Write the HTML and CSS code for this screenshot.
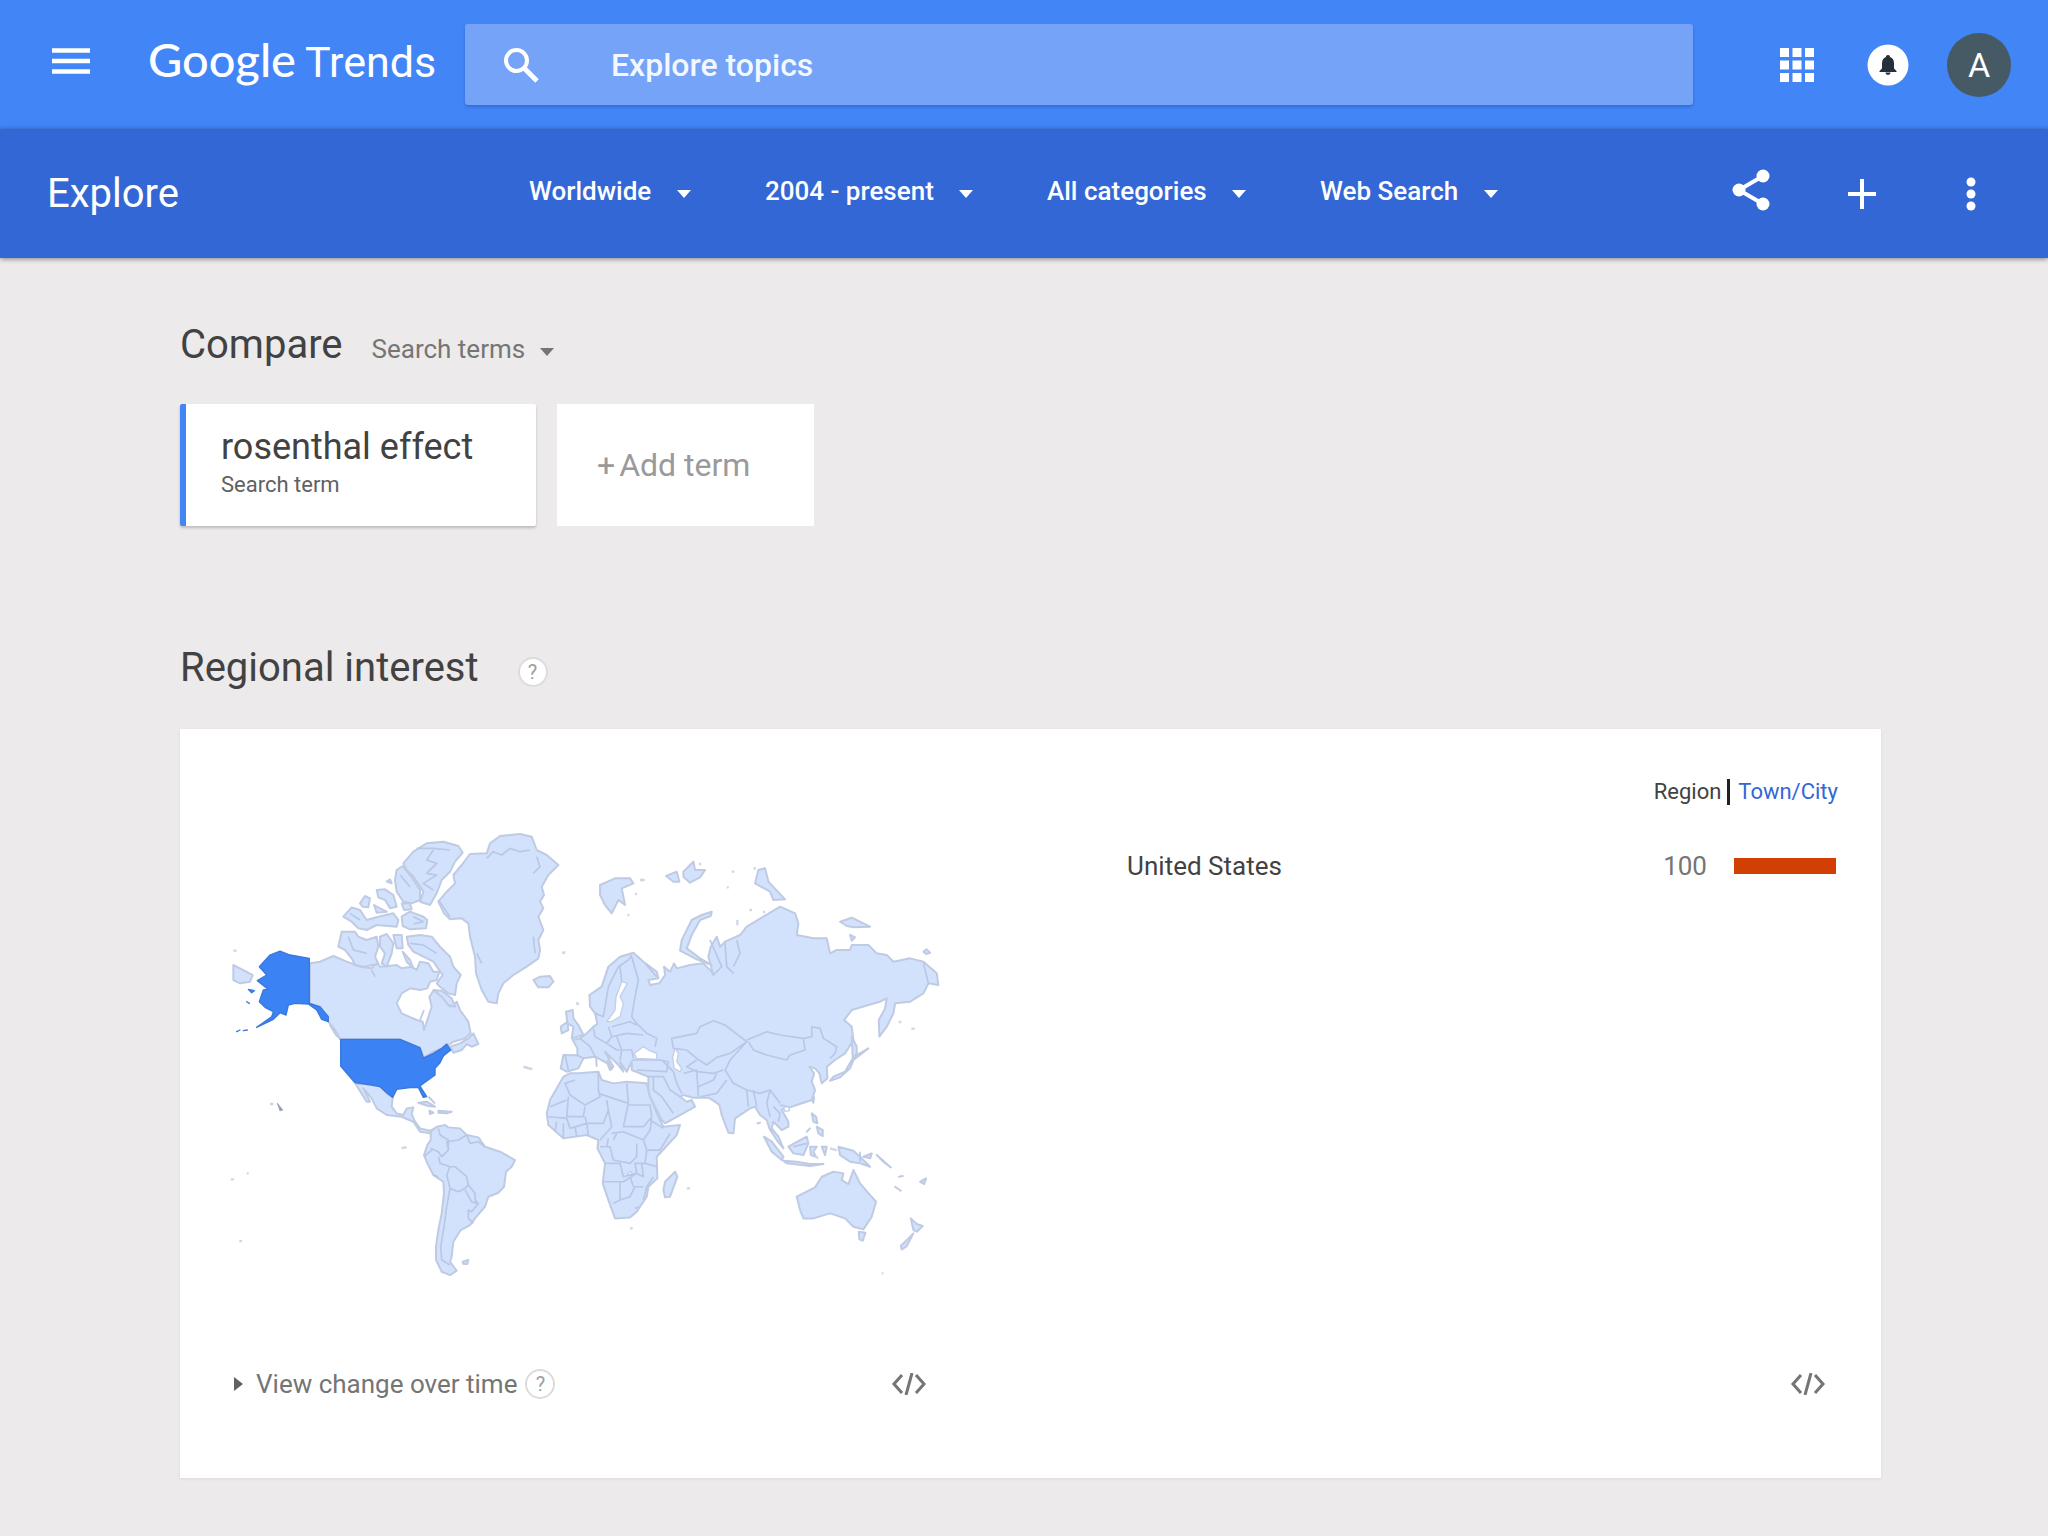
FILE: index.html
```html
<!DOCTYPE html>
<html lang="en">
<head>
<meta charset="utf-8">
<title>Google Trends - Explore</title>
<link rel="stylesheet" href="styles.css">
</head>
<body>
<header class="topbar">
  <button class="icon-btn menu" aria-label="Main menu">
    <svg width="38" height="26" viewBox="0 0 38 26"><path d="M0 2.5h38M0 13h38M0 23.5h38" stroke="#fff" stroke-width="4.5"/></svg>
  </button>
  <a class="logo" href="#"><span class="logo-google">Google</span><span class="logo-trends">Trends</span></a>
  <form class="search">
    <svg width="36" height="36" viewBox="0 0 36 36" fill="none" stroke="#fff" stroke-width="4"><circle cx="13.5" cy="13.5" r="10.5"/><path d="M21 21l13 13" stroke-width="5"/></svg>
    <input class="search-input" type="text" placeholder="Explore topics" aria-label="Explore topics">
  </form>
  <div class="account">
    <button class="icon-btn" aria-label="Apps">
      <svg width="34" height="34" viewBox="0 0 34 34" fill="#fff"><path d="M0 0h9v9H0zM12.500 0h9v9h-9zM25 0h9v9h-9zM0 12.500h9v9H0zM12.500 12.500h9v9h-9zM25 12.500h9v9h-9zM0 25h9v9H0zM12.500 25h9v9h-9zM25 25h9v9h-9z"/></svg>
    </button>
    <button class="icon-btn" aria-label="Notifications">
      <svg width="42" height="42" viewBox="0 0 42 42"><circle cx="21" cy="21" r="20.500" fill="#fff"/><path d="M21 11c1.500 0 2 .8 2 2 3 1 4 3.500 4 6.500v5l2.500 2.500v1H12.500v-1l2.500-2.500v-5c0-3 1-5.500 4-6.500 0-1.200.5-2 2-2zM18.500 28.500h5c0 1.500-1 2.300-2.500 2.300s-2.500-.8-2.500-2.300z" fill="#26303c"/></svg>
    </button>
    <button class="avatar" aria-label="Account">A</button>
  </div>
</header>

<div class="subbar">
  <h1 class="page-title">Explore</h1>
  <nav class="filters">
    <label class="filter"><select aria-label="Location"><option>Worldwide</option></select><svg class="caret" viewBox="0 0 14 8"><path d="M0 0h14L7 8z"/></svg></label>
    <label class="filter"><select aria-label="Time range"><option>2004 - present</option></select><svg class="caret" viewBox="0 0 14 8"><path d="M0 0h14L7 8z"/></svg></label>
    <label class="filter"><select aria-label="Category"><option>All categories</option></select><svg class="caret" viewBox="0 0 14 8"><path d="M0 0h14L7 8z"/></svg></label>
    <label class="filter"><select aria-label="Search type"><option>Web Search</option></select><svg class="caret" viewBox="0 0 14 8"><path d="M0 0h14L7 8z"/></svg></label>
  </nav>
  <div class="actions">
    <button class="icon-btn share" aria-label="Share">
      <svg width="38" height="42" viewBox="0 0 38 42"><path d="M31 7L7 21l24 14" fill="none" stroke="#fff" stroke-width="4"/><g fill="#fff"><circle cx="31" cy="7" r="6.500"/><circle cx="7" cy="21" r="6.500"/><circle cx="31" cy="35" r="6.500"/></g></svg>
    </button>
    <button class="icon-btn" aria-label="Add">
      <svg width="28" height="30" viewBox="0 0 28 30"><path d="M0 15h28M14 0v30" stroke="#fff" stroke-width="4"/></svg>
    </button>
    <button class="icon-btn" aria-label="More">
      <svg width="10" height="34" viewBox="0 0 10 34" fill="#fff"><circle cx="5" cy="5" r="4.500"/><circle cx="5" cy="17" r="4.500"/><circle cx="5" cy="29" r="4.500"/></svg>
    </button>
  </div>
</div>

<main class="content">
  <div class="compare">
    <h2 class="heading">Compare</h2>
    <label class="filter term-type"><select aria-label="Compare by"><option>Search terms</option></select><svg class="caret" viewBox="0 0 14 8"><path d="M0 0h14L7 8z"/></svg></label>
  </div>
  <div class="terms">
    <div class="term">
      <span class="term-name">rosenthal effect</span>
      <span class="term-kind">Search term</span>
    </div>
    <button class="add-term"><span>+</span><span>Add term</span></button>
  </div>

  <div class="regional">
    <h2 class="heading">Regional interest</h2>
    <button class="help" aria-label="Help">?</button>
  </div>
  <section class="panel">
    <div class="map-col">
      <svg class="map" viewBox="36 0 2085 1410" role="img" aria-label="World map, United States highlighted">
        <!-- Arctic Canada, Greenland, Canada -->
        <g class="land">
          <path d="M270 430L300 425 340 408 380 425 420 440 455 445 470 425 480 440 530 435 545 445 575 440 590 450 600 425 625 430 640 455 658 455 650 480 630 485 622 505 600 510 570 505 545 520 530 550 545 580 590 600 608 605 612 630 622 600 635 560 628 530 640 512 665 525 690 560 710 545 720 570 745 605 752 640 735 655 700 665 690 672 665 685 640 695 612 712 600 685 570 672 540 658 360 658 345 630 325 605 300 570 270 548Z"/>
          <path d="M690 680L720 670 745 655 760 640 775 672 755 680 740 672 725 690 700 698Z"/>
          <path d="M355 380L365 335 405 335 415 350 440 360 470 350 475 380 465 410 475 432 430 440 405 435 395 415 375 390Z"/>
          <path d="M370 290L395 262 420 270 440 300 475 290 520 280 535 300 530 320 470 315 440 330 415 325 395 305Z"/>
          <path d="M420 250L435 228 450 235 445 262 428 260ZM470 210L495 208 520 225 530 260 510 265 495 240 475 232ZM462 255L480 265 500 275 470 278ZM500 185L510 178 515 190Z"/>
          <path d="M525 180L530 150 548 138 570 165 600 210 600 240 575 250 550 245 530 215Z"/>
          <path d="M550 130L580 95 620 70 670 65 715 78 728 98 705 125 690 155 665 180 650 220 630 255 600 245 610 215 580 170 560 150Z"/>
          <path d="M545 290L570 275 610 290 622 300 618 325 570 328 548 318ZM545 250L570 250 575 268 552 270Z"/>
          <path d="M480 350L500 342 520 370 515 400 500 440 485 430 495 400 480 380ZM520 345L545 345 548 385 530 385ZM548 395L570 420 580 445 560 425Z"/>
          <path d="M560 350L600 345 635 350 660 380 690 410 700 440 722 465 710 490 705 525 685 520 660 500 650 490 668 465 640 425 610 410 580 395 565 375Z"/>
          <path d="M640 510L665 512 695 535 705 560 685 555 665 530Z"/>
          <path d="M655 245L680 215 705 190 700 165 725 135 750 102 800 100 810 70 840 48 900 42 935 50 950 90 980 105 1015 135 985 165 965 200 972 225 960 245 970 265 955 290 970 330 955 360 960 390 955 415 920 440 880 465 850 490 835 520 830 550 805 545 785 510 768 460 765 410 750 350 745 310 725 295 690 298 672 280Z"/>
          <path d="M940 480L960 470 990 468 1000 485 985 502 955 502ZM40 435L70 450 98 465 90 485 60 490 40 480Z"/>
          <path d="M405 788L455 795 485 800 500 820 518 832 515 860 530 880 550 885 560 865 580 862 575 882 585 905 600 925 630 932 645 925 630 940 600 935 580 905 545 890 500 885 470 865 455 835 430 805 450 845 440 845 415 805Z"/>
          <path d="M595 848L620 845 645 860 625 858ZM655 872L695 875 680 880 655 878ZM628 872L640 878 630 882ZM330 615L360 655 348 645ZM625 830L645 850" />
        </g>
        <g class="detail">
          <path d="M640 90L620 120 650 130 620 160 650 165 610 190 640 210M800 115L820 95 845 105 870 85 900 95 930 90M950 110L960 140 940 160M590 85L640 85 690 90M580 290L610 305 580 312M570 370L610 375 650 400M385 350L400 390 440 400M390 280L420 300M770 400L785 430M940 350L945 400M540 165L570 200M655 240L690 290M455 450L465 470M600 600L612 570"/>
        </g>
        <g class="us">
          <path d="M362 658H540L600 683 610 714 640 700 665 685 680 672 692 690 670 708 660 728 645 745 645 765 610 790 600 798 620 830 610 832 595 802 570 803 530 808 518 832 500 818 480 800 455 795 405 788 385 765 362 738Z"/>
          <path d="M268 415V550L300 560 325 590 325 605 305 598 290 570 265 552 225 550 205 555 198 585 180 578 160 598 110 622 155 590 160 575 135 562 118 545 130 510 145 508 112 482 140 465 118 440 150 405 180 393 210 405Z"/>
          <path d="M85 508L103 512 95 518ZM80 545L88 550ZM50 635L60 630ZM70 632L82 630Z"/>
        </g>
        <path class="hawaii" d="M172 850L188 870 180 872Z"/>
        <g class="specks"><path d="M40 392h10M150 852h10M915 742l22 5M1028 398h8M545 984l15-3M32 1078h10M80 1060h6M58 1263h8"/></g>

        <!-- South America -->
        <g transform="translate(0 720)">
          <g class="land">
            <path d="M632 215L650 200 675 195 685 202 720 205 740 225 775 232 795 260 840 275 885 300 875 320 858 335 852 380 835 398 805 410 795 440 765 475 750 495 722 510 700 545 695 590 690 605 710 632 690 645 665 635 648 600 648 560 655 510 665 460 672 400 670 365 640 345 622 310 612 285 622 255 632 240Z"/>
            <path d="M728 605L745 600 742 612 730 612Z"/>
          </g>
          <path class="border" d="M632 265L655 275 665 290 685 270 685 240 660 225 655 205M685 270L680 245 715 240 740 225M740 225L750 250 775 245 795 260M655 290L660 310 690 320 705 320 740 350 745 375 765 400 765 420 775 430 755 455 745 450 745 475 760 490M690 320L680 345 690 385 715 395 735 385 745 375M690 385L680 440 672 500 662 560 665 600 690 615M735 390L755 425 770 430M640 345L655 350M612 290L635 270"/>
        </g>

        <!-- Europe and Asia -->
        <g transform="translate(960 0)">
          <g class="land">
            <path d="M62 745L70 705 112 706 112 685 98 660 120 655 140 640 160 620 172 612 165 580 150 560 148 525 185 500 205 440 240 410 280 398 310 425 350 455 355 475 325 480 330 495 358 490 375 465 372 440 390 455 402 430 410 445 450 435 490 430 515 455 520 465 505 410 512 380 530 350 540 380 555 365 600 345 620 320 670 290 720 260 765 280 775 310 770 345 820 355 860 355 870 400 890 390 930 390 935 375 985 375 1010 400 1040 405 1060 425 1110 415 1150 425 1190 460 1195 495 1165 490 1150 520 1110 545 1065 550 1060 580 1040 620 1018 650 1016 600 1035 565 1040 535 1020 545 985 555 935 570 912 600 935 620 940 660 915 700 885 720 860 740 862 775 845 790 838 760 825 745 808 740 822 760 815 785 825 810 815 840 770 855 740 865 725 870 745 905 745 920 725 930 710 915 700 905 695 925 715 950 730 985 710 960 688 925 680 900 660 885 645 860 630 865 585 895 580 940 565 938 545 885 538 855 525 845 505 833 460 833 430 825 420 830 440 845 455 840 465 860 420 885 375 910 365 900 340 850 325 825 325 795 325 770 275 750 275 725 260 755 240 725 250 755 235 735 195 695 220 740 210 750 202 730 165 710 130 715 115 745 80 755Z"/>
            <path d="M180 195L225 175 270 175 280 190 245 205 255 255 235 240 215 280 195 255 180 225ZM378 168L410 155 418 185 400 185ZM430 155L460 125 465 150 495 150 480 172 450 188 430 170ZM645 190L655 150 675 145 685 185 735 238 700 240 690 215Z"/>
            <path d="M515 275L512 288 480 300 455 345 440 385 480 415 515 435 470 418 420 392 425 360 455 300 485 285ZM900 305L935 293 990 320 940 322 920 318ZM930 345L945 352 935 362Z"/>
            <path d="M78 575L98 570 100 595 115 615 130 645 95 655 100 620 82 610ZM62 620L82 605 85 630 65 640ZM935 650L950 680 950 700 938 720ZM985 685L940 720 930 745 900 772 870 782 880 770 915 755 935 720 950 705Z"/>
            <path d="M1150 395L1160 388 1170 398 1158 402Z"/>
          </g>
          <g class="sea">
            <path d="M282 700L310 680 325 690 350 700 350 718 290 715ZM405 685L415 700 410 725 425 745 420 755 402 745 398 710ZM245 485L262 490 240 530 250 550 240 590 215 605 200 605 225 570 228 530Z"/>
          </g>
          <path class="border" d="M165 580L190 590 205 500 235 440 265 420 275 405M240 440L245 485M275 410L295 480 285 530 275 590 290 610 320 640 350 655 345 680M160 625L165 650 200 670 215 650 205 620M215 620L270 605 290 615M215 650L260 640 310 645M200 670L230 690 275 690 280 715M120 655L150 680 165 710M230 650L245 690 240 720M110 705L130 715M75 705L85 750M395 655L470 640 480 620 520 602 555 615 620 665 570 700 530 712 500 735 470 715 440 690 400 685ZM620 660L680 635 720 645 790 655 795 690 750 705 740 720 680 705 640 690 625 665M790 655L815 650 815 620 840 625 850 655 890 680 885 700 870 715M620 665L570 720 555 750 580 790 620 810 660 820 690 810 720 850M430 760L470 750 475 830M470 720L440 740 470 755 520 760 550 750M475 800L520 780 530 760M480 830L530 820 560 780M325 770L370 770 390 810 420 830M365 720L385 740 400 755 410 790 425 820M340 770L340 810 365 830 400 880M275 720L360 720 385 725 380 755 290 750M700 860L720 880 715 905M690 810L680 850 690 890M720 855L745 860M640 810L650 860M620 810L625 860M315 430L350 470M510 360L545 440 520 465M555 370L560 440 580 460M590 360L600 400 580 440M1150 430L1165 490"/>
          <g class="specks"><path d="M300 180h14M285 222h6M262 285h6M575 155h8M560 202h6M628 270h8M592 300v16M672 272v8M640 145h8M66 398h8M1076 606h8M1114 626h10M110 552h6M480 128v8"/></g>
        </g>

        <!-- Africa, South-East Asia, Oceania -->
        <g transform="translate(900 540)">
          <g class="land">
            <path d="M150 220L175 220 235 215 245 240 280 250 320 245 380 250 388 285 415 350 430 380 480 375 470 405 410 470 412 535 385 560 380 590 350 635 330 652 285 655 265 600 248 550 255 490 232 445 235 420 200 405 130 415 85 375 80 340 90 300 130 230Z"/>
            <path d="M465 515L472 530 450 590 435 592 430 570 435 545ZM830 590L885 562 905 530 940 515 970 520 965 540 985 552 1000 510 1020 550 1050 585 1068 605 1055 650 1030 688 1000 680 975 655 930 640 880 655 850 655 840 630ZM1016 695L1036 698 1028 722 1018 718Z"/>
            <path d="M732 410L755 425 790 470 785 480 755 455ZM790 482L830 485 870 492 910 492 870 498 800 490ZM805 440L840 420 860 410 865 430 850 465 820 460ZM870 440L890 440 880 455 888 470 872 465ZM875 340L888 350 892 370 880 365ZM890 380L908 390 908 408 895 400ZM870 385L860 395ZM875 300L882 292 880 308ZM905 440L920 440 915 465ZM955 440L1000 452 1020 470 1050 500 1020 490 990 485 960 465ZM1030 470L1055 460 1050 475ZM1070 465L1112 502 1090 485Z"/>
            <path d="M1172 655L1190 672 1208 678 1190 695 1180 690ZM1180 700L1160 738 1145 748 1142 738 1165 715ZM1125 560L1142 572ZM1200 545L1218 535 1212 552ZM1137 530L1148 528ZM712 370L720 368ZM262 180L276 210M228 170L230 200"/>
          </g>
          <g class="sea"><path d="M790 322L805 320 808 332 795 334ZM322 520L335 515 335 530Z"/></g>
          <path class="border" d="M235 215L235 270 240 290 195 315 150 285 135 250 165 240M320 250L325 310 310 380 370 380 395 350 390 315 325 315M235 280L325 310M145 290L140 350 190 350 195 320M90 320L140 300M85 350L140 355 150 385M195 350L200 370 250 370 265 330 260 300M150 385L200 370 205 405M130 370L130 415M110 365L105 395M165 380L170 410M265 330L275 380 240 420M275 400L310 395 370 420 390 390 395 355M280 420L290 400M240 440L270 440 280 480 330 490 350 470 350 430M255 490L300 490 310 530 350 520 345 490 375 490 380 450 420 450 450 400M390 360L430 385M370 420L380 450M250 545L310 545 350 520 370 530 365 490M300 545L300 600 280 610M300 600L330 590 345 560 370 560M330 530L340 560M370 600L380 560 400 530M345 625L355 620M375 490L412 500M260 440L265 415M1020 455L1020 485M820 440L860 430"/>
          <g class="specks"><path d="M10 200l20 6M500 565h10M330 685h8M168 10h8M930 445l20 6M885 470l10 4M1085 820h5"/></g>
        </g>
      </svg>
      <div class="panel-foot">
        <button class="expand">
          <svg width="9" height="14" viewBox="0 0 9 14"><path d="M0 0l9 7-9 7z" fill="#616161"/></svg>
          View change over time
        </button>
        <button class="help" aria-label="Help">?</button>
        <button class="icon-btn embed" aria-label="Embed map">
          <svg width="36" height="22" viewBox="0 0 36 22" fill="none" stroke="#757575" stroke-width="3"><path d="M11 2L3 11l8 9M25 2l8 9-8 9M21 0l-6 22"/></svg>
        </button>
      </div>
    </div>

    <div class="list-col">
      <div class="tabs"><span class="tab-current">Region</span><a class="tab-link" href="#">Town/City</a></div>
      <table class="regions">
        <tr><th scope="row">United States</th><td class="score">100</td><td class="bar-cell"><div class="bar"></div></td></tr>
      </table>
      <div class="panel-foot list-foot">
        <button class="icon-btn embed" aria-label="Embed list">
          <svg width="36" height="22" viewBox="0 0 36 22" fill="none" stroke="#757575" stroke-width="3"><path d="M11 2L3 11l8 9M25 2l8 9-8 9M21 0l-6 22"/></svg>
        </button>
      </div>
    </div>
  </section>
</main>
</body>
</html>
```
FILE: styles.css
```css
* { box-sizing: border-box; }

body {
  margin: 0;
  background: #edeaec;
  color: #424242;
  font-family: Roboto, "Liberation Sans", sans-serif;
}

button, select, input {
  margin: 0;
  padding: 0;
  border: 0;
  background: none;
  color: inherit;
  font: inherit;
}

h1, h2 { margin: 0; font-weight: 400; }
svg { display: block; }

/* Top bar */
.topbar {
  display: flex;
  align-items: center;
  height: 129px;
  padding: 0 37px 0 52px;
  background: #4285f6;
  color: #fff;
}
.menu { margin-bottom: 8px; }
.logo {
  display: flex;
  align-items: baseline;
  gap: 9px;
  width: 317px;
  margin-left: 58px;
  padding-bottom: 8px;
  color: #fff;
  text-decoration: none;
  white-space: nowrap;
}
.logo-google { font: 500 47px/56px Lato, sans-serif; }
.logo-trends { font-size: 43px; line-height: 56px; font-weight: 400; }
.search {
  flex: 1;
  display: flex;
  align-items: center;
  gap: 72px;
  height: 81px;
  padding-left: 38px;
  border-radius: 3px;
  background: #74a3f8;
  box-shadow: 0 2px 3px rgba(30, 70, 160, .4);
}
.search-input {
  flex: 1;
  min-width: 0;
  font-size: 32px;
  font-weight: 500;
  line-height: 40px;
  outline: 0;
}
.search-input::placeholder { color: #f3f8ff; opacity: 1; }
.account {
  display: flex;
  align-items: center;
  gap: 53px;
  margin-left: 87px;
}
.avatar {
  width: 64px;
  height: 64px;
  margin-left: -15px;
  border-radius: 50%;
  background: #455a64;
  font-size: 34px;
}

/* Explore bar */
.subbar {
  display: flex;
  align-items: center;
  height: 129px;
  padding: 0 72px 0 47px;
  background: #3367d6;
  box-shadow: 0 1px 5px rgba(0, 0, 0, .45);
  color: #fff;
}
.page-title { width: 482px; font-size: 40px; line-height: 48px; }
.filters {
  display: flex;
  gap: 74px;
  padding-bottom: 6px;
}
.filter {
  display: flex;
  align-items: center;
  gap: 25px;
  font-size: 26px;
  line-height: 32px;
  font-weight: 500;
}
.filter select { appearance: none; }
.caret { width: 14px; height: 8px; margin-top: 6px; fill: currentColor; }
.actions {
  display: flex;
  align-items: center;
  gap: 90px;
  margin-left: auto;
}
.share { margin: 0 -12px 8px 0; }

/* Content */
.content { padding: 63px 167px 59px 180px; }
.heading { font-size: 40px; line-height: 48px; }
.compare {
  display: flex;
  align-items: baseline;
  gap: 29px;
}
.term-type { gap: 14px; color: #757575; font-weight: 400; }
.terms {
  display: flex;
  gap: 21px;
  margin-top: 35px;
}
.term {
  display: flex;
  flex-direction: column;
  width: 356px;
  height: 122px;
  padding: 21px 0 0 35px;
  border-left: 6px solid #4285f4;
  border-radius: 2px;
  background: #fff;
  box-shadow: 0 2px 3px rgba(0, 0, 0, .2);
}
.term-name { font-size: 36px; line-height: 44px; }
.term-kind { font-size: 22px; line-height: 32px; color: #616161; }
.add-term {
  display: flex;
  align-items: center;
  gap: 4px;
  width: 257px;
  padding-left: 40px;
  background: #fff;
  color: #9a9a9a;
  font-size: 32px;
}
.regional {
  display: flex;
  align-items: center;
  gap: 39px;
  margin: 118px 0 37px;
}
.help {
  width: 30px;
  height: 30px;
  border: 2px solid #dcdcdc;
  border-radius: 50%;
  background: #fff;
  color: #a0a0a0;
  font-size: 20px;
  line-height: 26px;
}
.regional .help { margin-top: 8px; }

/* Panel */
.panel {
  display: grid;
  grid-template-columns: 44fr 45fr;
  gap: 200px;
  padding: 34px 43px 74px 52px;
  background: #fff;
  box-shadow: 0 1px 3px rgba(0, 0, 0, .08);
}
.map { width: 100%; margin-top: 57px; overflow: visible; }
.map path { stroke-linejoin: round; }
.land path { fill: #d2e2fc; stroke: #bfcae3; stroke-width: 6; }
.us path { fill: #3b82f4; stroke: #3978dc; stroke-width: 4; }
.map .hawaii { fill: #8d98ad; stroke: #a3adc0; stroke-width: 3; }
.sea path { fill: #fff; stroke: #c3cfe8; stroke-width: 4; }
.border, .detail path { fill: none; stroke: #b9c7e6; stroke-width: 5; }
.specks path { fill: none; stroke: #d3d5e6; stroke-width: 7; }
.panel-foot {
  display: flex;
  align-items: center;
  gap: 8px;
  height: 40px;
  margin-top: 74px;
}
.expand {
  display: flex;
  align-items: center;
  gap: 13px;
  padding-left: 2px;
  color: #757575;
  font-size: 26px;
  line-height: 40px;
}
.embed { margin-left: auto; }
.list-col { display: flex; flex-direction: column; }
.tabs {
  display: flex;
  justify-content: flex-end;
  align-items: center;
  font-size: 22px;
  line-height: 26px;
  padding-top: 16px;
}
.tab-current { padding-right: 6px; border-right: 3px solid #212121; }
.tab-link { margin-left: 8px; color: #3367d6; text-decoration: none; }
.regions {
  width: 100%;
  margin-top: 41px;
  border-collapse: collapse;
  font-size: 26px;
  line-height: 40px;
}
.regions th, .regions td { padding: 0; }
.regions th { font-weight: 400; text-align: left; }
.score { color: #757575; text-align: right; }
.bar-cell { width: 131px; }
.bar { width: 102px; height: 16px; margin-left: 27px; background: #d23f05; }
.list-foot { margin-top: auto; padding-right: 12px; }
```
